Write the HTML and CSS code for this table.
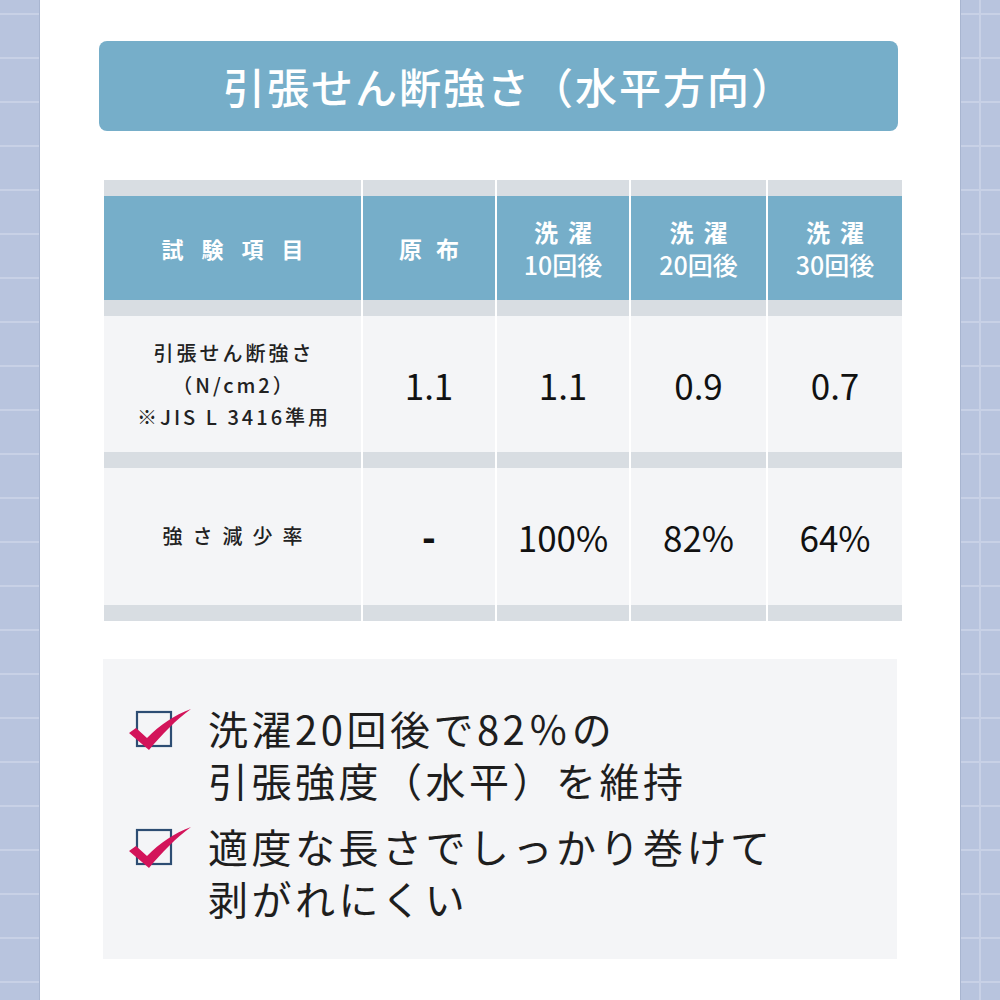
FILE: index.html
```html
<!DOCTYPE html>
<html lang="ja">
<head>
<meta charset="utf-8">
<title>引張せん断強さ（水平方向）</title>
<link rel="stylesheet" href="styles.css">
</head>
<body>
<div class="page">
  <div class="side side-left"></div>
  <main class="main">
    <div class="title-box"><h1 class="title">引張せん断強さ（水平方向）</h1></div>

    <div class="table">
      <div class="col col-wide">
        <div class="cell head"><span class="h-item">試験項目</span></div>
        <div class="cell body r1"><span class="label">引張せん断強さ<br>（N/cm2）<br>※JIS L 3416準用</span></div>
        <div class="cell body r2"><span class="label label-spaced">強さ減少率</span></div>
      </div>
      <div class="col">
        <div class="cell head"><span class="h-orig">原布</span></div>
        <div class="cell body r1"><span class="num">1.1</span></div>
        <div class="cell body r2"><span class="num dash">-</span></div>
      </div>
      <div class="col">
        <div class="cell head"><span class="h-wash"><span class="h-top">洗濯</span><br>10回後</span></div>
        <div class="cell body r1"><span class="num">1.1</span></div>
        <div class="cell body r2"><span class="num">100%</span></div>
      </div>
      <div class="col col-c">
        <div class="cell head"><span class="h-wash"><span class="h-top">洗濯</span><br>20回後</span></div>
        <div class="cell body r1"><span class="num">0.9</span></div>
        <div class="cell body r2"><span class="num">82%</span></div>
      </div>
      <div class="col col-c">
        <div class="cell head"><span class="h-wash"><span class="h-top">洗濯</span><br>30回後</span></div>
        <div class="cell body r1"><span class="num">0.7</span></div>
        <div class="cell body r2"><span class="num">64%</span></div>
      </div>
    </div>

    <div class="points">
      <div class="point">
        <svg class="check" width="64" height="50" viewBox="0 0 64 50" aria-hidden="true">
          <rect x="9" y="7" width="34" height="34" fill="none" stroke="#2d4d73" stroke-width="2.2"/>
          <path d="M1,28 L8,23 L19,33 C32,20 46,10 63,4 C48,15 34,29 21,45 Z" fill="#d3145a"/>
        </svg>
        <p class="point-text">洗濯20回後で82％の<br>引張強度（水平）を維持</p>
      </div>
      <div class="point">
        <svg class="check" width="64" height="50" viewBox="0 0 64 50" aria-hidden="true">
          <rect x="9" y="7" width="34" height="34" fill="none" stroke="#2d4d73" stroke-width="2.2"/>
          <path d="M1,28 L8,23 L19,33 C32,20 46,10 63,4 C48,15 34,29 21,45 Z" fill="#d3145a"/>
        </svg>
        <p class="point-text">適度な長さでしっかり巻けて<br>剥がれにくい</p>
      </div>
    </div>
  </main>
  <div class="side side-right"></div>
</div>
</body>
</html>
```

FILE: styles.css
```css
html, body {
  margin: 0;
  padding: 0;
  background: #ffffff;
}

body {
  font-family: "Noto Sans CJK JP", "Noto Sans", sans-serif;
  color: #1a1a1a;
}

.page {
  display: flex;
  width: 1000px;
  height: 1000px;
  overflow: hidden;
}

.side {
  width: 40px;
  height: 1000px;
  flex: none;
  background-color: #b8c4de;
  background-image:
    repeating-linear-gradient(to bottom, transparent 0, transparent 13px, #c8d1e6 13px, #c8d1e6 15px, transparent 15px, transparent 44px);
}

.side-left {
  box-shadow: inset -1px 0 0 #a8b5d0;
}

.side-right {
  box-shadow: inset 1px 0 0 #a8b5d0;
  background-image:
    linear-gradient(to right, transparent 19px, #c8d1e6 19px, #c8d1e6 21px, transparent 21px),
    repeating-linear-gradient(to bottom, transparent 0, transparent 13px, #c8d1e6 13px, #c8d1e6 15px, transparent 15px, transparent 44px);
}

.main {
  width: 920px;
  flex: none;
  padding-top: 41px;
  box-sizing: border-box;
}

.title-box {
  margin-left: 59px;
  width: 799px;
  height: 90px;
  border-radius: 8px;
  background: #76aec9;
  display: flex;
  align-items: center;
  justify-content: center;
}

.title {
  margin: 0;
  color: #ffffff;
  font-size: 42px;
  font-weight: 500;
  letter-spacing: 2px;
  line-height: 1;
  margin-left: 21px;
}

/* table */
.table {
  margin-top: 49px;
  margin-left: 64px;
  display: flex;
  gap: 2px;
}

.col {
  width: 132px;
  display: flex;
  flex-direction: column;
}

.col-wide { width: 257px; }
.col-c { width: 135px; }
.col-c:last-child { width: 134px; }

.cell {
  display: flex;
  align-items: center;
  justify-content: center;
  text-align: center;
}

.head {
  height: 104px;
  background: #76aec9;
  border-top: 16px solid #d8dde2;
  border-bottom: 16px solid #d8dde2;
  color: #ffffff;
  font-weight: 700;
}

.body {
  background: #f4f5f7;
}

.r1 { height: 136px; }
.r2 {
  height: 137px;
  border-top: 16px solid #d8dde2;
  border-bottom: 16px solid #d8dde2;
}

.h-item {
  font-size: 22px;
  letter-spacing: 18px;
  padding-left: 18px;
}

.h-orig {
  font-size: 23px;
  letter-spacing: 14px;
  padding-left: 14px;
}

.h-wash {
  font-size: 25px;
  line-height: 32px;
  font-weight: 500;
  margin-top: -2px;
}

.h-top {
  font-size: 24px;
  font-weight: 700;
  letter-spacing: 10px;
  padding-left: 10px;
}

.label {
  font-size: 20px;
  line-height: 32px;
  letter-spacing: 3px;
  font-weight: 500;
  padding-left: 3px;
  margin-top: 2px;
  color: #222222;
}

.label-spaced {
  letter-spacing: 10px;
  padding-left: 10px;
  margin-top: -2px;
}

.num {
  font-size: 35px;
  line-height: 1;
  font-weight: 400;
  color: #111111;
}

.dash {
  font-weight: 900;
  font-size: 36px;
  margin-top: -4px;
}

/* points */
.points {
  margin-top: 38px;
  margin-left: 63px;
  width: 794px;
  height: 300px;
  box-sizing: border-box;
  background: #f4f5f7;
  padding: 43px 0 0 25px;
  display: flex;
  flex-direction: column;
  gap: 14px;
}

.point {
  display: flex;
  align-items: flex-start;
  gap: 16px;
}

.check {
  flex: none;
  margin-top: 3px;
}

.point-text {
  margin: 0;
  font-size: 40px;
  line-height: 52px;
  letter-spacing: 3.5px;
  color: #1e1e1e;
}
```
